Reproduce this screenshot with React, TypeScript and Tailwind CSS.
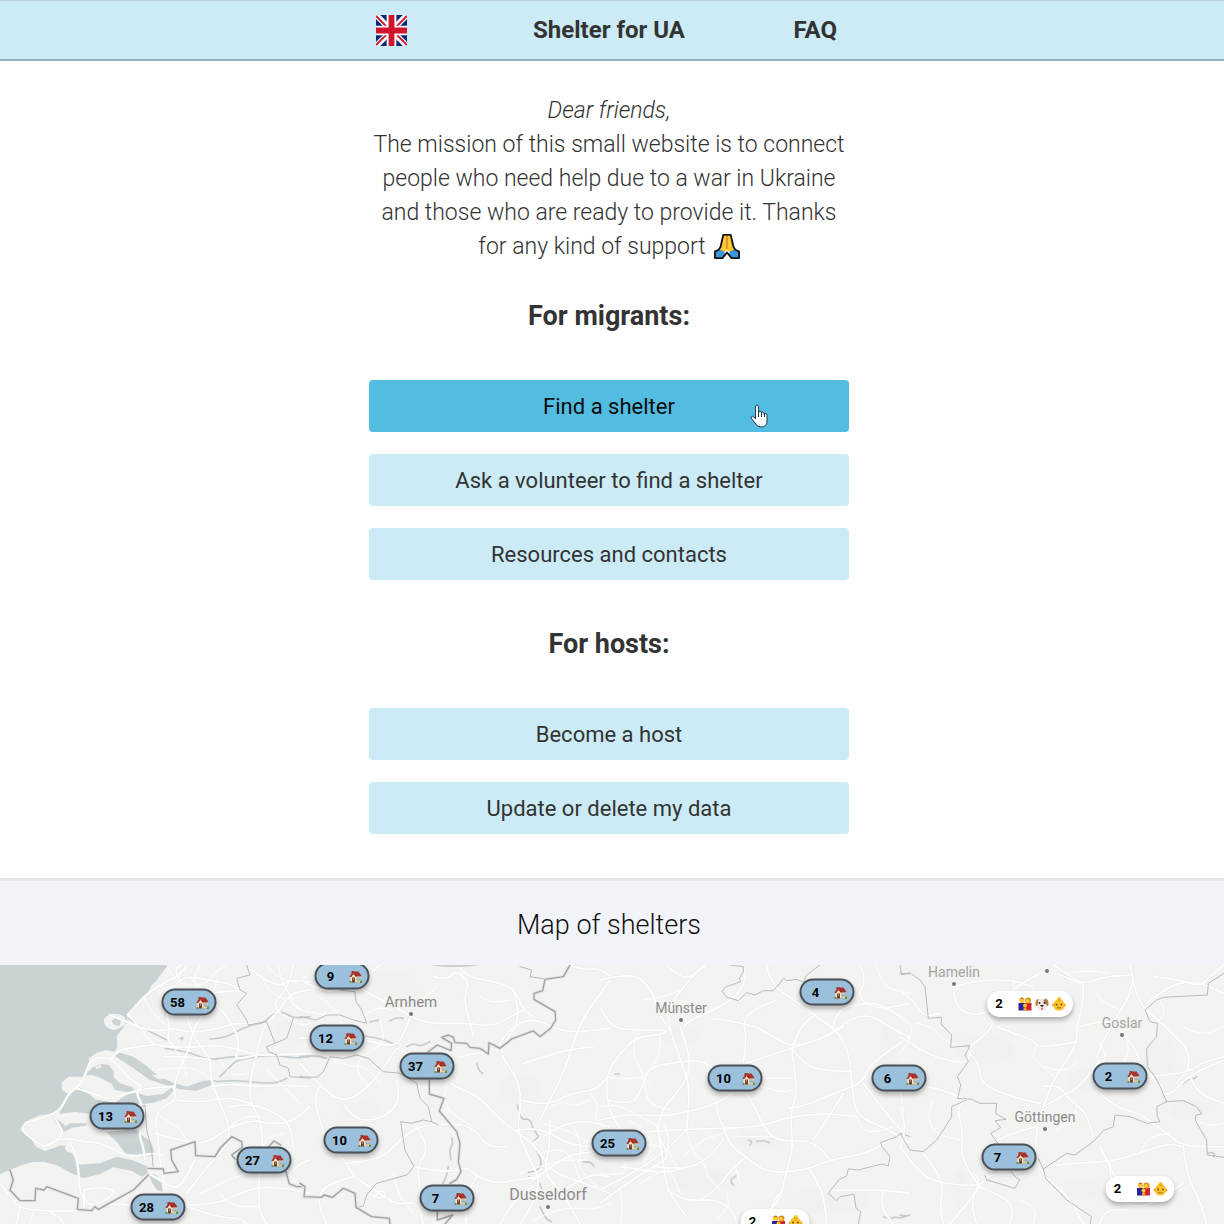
import React from "react";

const MAP_WIDTH = 1224;
const MAP_HEIGHT = 259;

/* ---------- Map geometry: each sheet is drawn in its own 3x units ---------- */

type Sheet = { x: number; roads: string[]; minor: string[]; borders: string[]; regions: string[]; rivers: string[] };

const sheets: Sheet[] = [
  {
    x: 0,
    roads: [
      "384,165 430,110 480,75 530,50 560,20",
      "480,75 500,100 540,60 570,50 630,60 700,75 735,100",
      "384,165 400,178 440,230 460,255 520,262 570,262 650,255 700,265 770,285 830,285 930,280",
      "540,60 520,30 545,15",
      "570,50 600,90 650,100 700,90 735,95",
      "330,165 370,180 410,200 470,215 520,205 560,215 600,215 660,205 700,190 760,190",
      "500,160 510,200 500,240 530,265",
      "560,165 575,220 610,270 632,300 632,360 660,430 690,500 680,560 630,610 560,700",
      "610,165 580,200 570,262 540,320 520,380 530,420 490,440 465,470 475,540 480,620 500,690",
      "460,255 410,260 350,272 335,300 305,290 270,300 255,350 230,385 205,400 180,455 120,475 75,490 65,510 100,540 140,565 165,540 210,535 250,545 310,550 360,580 400,590 460,580 490,585",
      "165,475 180,500 190,520 165,545 140,555",
      "210,545 235,600 237,690 255,720 250,750",
      "230,385 280,400 330,420 380,400 405,395 440,385 520,380",
      "335,300 360,320 385,355 430,380 405,395 435,450 415,520 430,560 435,600",
      "0,670 40,720 60,745 150,755 270,750 340,730 390,735",
      "60,745 50,790",
      "150,755 180,770 190,792",
      "250,690 290,680 350,690 320,720 270,740 250,710 255,690",
      "550,735 640,735 720,700 780,680 860,685 930,700",
      "550,735 640,770 720,775 740,792",
      "780,680 770,740 800,792",
      "465,520 500,530 560,545 620,550 690,500 760,480 800,490 870,490 930,440",
      "770,285 750,350 750,430 780,470 790,560 775,680",
      "632,380 700,370 760,380 850,375 930,380",
      "690,440 750,430 820,455 870,490 880,560",
      "530,420 600,430 680,410 750,430",
      "770,285 780,210 840,150 870,100 930,90",
      "835,15 840,60 870,100 880,140 930,160",
      "740,20 780,50 840,80 870,60 930,65",
      "880,15 870,60 850,100 820,130 840,160",
      "632,300 570,290 490,290",
      "645,130 700,190 720,260 700,300 770,285",
      "445,640 480,660 530,690 560,650 590,590",
      "870,640 900,610 930,600",
    ],
    minor: [
      "500,15 520,60 570,80 620,70 640,40 680,15",
      "600,15 580,50 590,85",
      "650,60 640,110 620,165",
      "430,110 450,150 480,180 540,230",
      "475,330 540,320 600,330 632,360",
      "520,262 550,300 560,350",
      "660,300 690,350 740,340",
      "480,470 540,500 560,545",
      "800,330 850,380 900,430",
      "790,60 810,100 860,120 900,110",
      "800,15 830,50 880,70 920,50",
      "850,165 900,200 930,190",
      "100,755 90,792",
      "600,700 700,650 760,640 850,610",
      "660,700 690,740 780,740",
      "690,500 720,470 780,470",
      "850,520 800,530 790,560",
    ],
    rivers: [
      "384,175 430,205 480,230 500,240",
      "540,235 550,230 545,240",
      "630,237 670,235 710,215 750,195 790,190 820,160 850,155 880,175 930,170",
      "495,265 560,275 600,290 632,300 690,290 740,290 770,285",
      "660,350 690,320 710,300 770,290 830,285 880,295 930,290",
      "650,365 700,360 770,368 830,370 860,355",
    ],
    regions: [
      "740,15 750,45 710,55 720,90 740,100 710,135 740,180 745,195 800,185 825,250 800,260 805,275 830,285",
      "880,175 860,235 825,250",
      "830,285 840,315 865,325 870,350 930,355",
      "405,450 435,435 440,510 455,570 460,625",
    ],
    borders: [
      "30,630 40,660 30,690 60,722 105,722 107,685 132,690 140,680 235,715 232,748 275,752 285,740 295,748 360,712 400,690 445,645",
      "445,625 490,627 492,640 535,635 515,600 512,570 585,545 587,587 645,590 660,565 695,530 725,545 727,562",
      "727,562 695,585 705,597",
      "806,560 822,543 842,555",
      "858,635 868,672 890,680 912,680 915,712 930,712",
    ],
  },
  {
    x: 300,
    roads: [
      "0,60 40,80 100,100 160,60 200,50 240,15",
      "160,60 200,100 270,130 330,170 390,190 460,190 510,190 580,200 640,165 670,150",
      "400,50 440,60 470,30 510,70 490,110 510,190 520,230",
      "470,15 500,50 560,60 640,80 670,150 700,170",
      "0,235 100,230 200,240 290,265 320,200 330,170",
      "290,265 350,290 440,370 540,410 590,470 640,510 700,550 760,640 830,660 930,700",
      "640,90 670,180 590,270 650,350 665,420 650,510 690,600 720,660 700,730 660,792",
      "590,270 620,210 700,170 790,220 930,205",
      "0,310 60,380 130,430 210,380 290,265",
      "60,380 40,400 60,490 90,560 140,610 160,650 240,700",
      "130,430 160,480 240,480 300,430 290,360",
      "140,610 240,600 290,550 350,500 440,490 520,500 560,560 620,560",
      "340,620 440,640 500,620 530,650 590,670 650,660 720,650",
      "350,500 390,560 350,620 360,680",
      "160,650 80,670 50,720 80,792",
      "240,700 290,740 350,720 370,792",
      "930,60 880,130 840,190 790,340 760,400 720,480",
      "670,310 730,290 800,270 880,260",
      "660,420 740,440 810,400 890,390 930,340",
      "500,792 490,720 530,650",
      "700,550 770,500 850,480 930,500",
      "750,480 750,560 730,640 790,700 840,792",
      "700,660 800,580 880,580 930,540",
      "780,700 860,640 930,650",
      "800,15 850,30 900,25 930,50",
      "650,510 720,500 800,550 870,560",
      "600,792 640,720 700,680",
      "210,700 240,720 260,700 240,690 220,715",
    ],
    minor: [
      "60,110 110,150 130,200 100,240",
      "240,180 260,240 220,270 180,290 170,340 210,380",
      "410,80 380,110 350,130",
      "540,110 570,130 630,120",
      "480,290 530,280 590,270",
      "440,370 420,440 520,500",
      "100,300 150,320 200,320 240,370",
      "20,150 60,170 120,150",
      "660,640 720,620 780,600 860,600",
      "740,450 780,420 820,440 870,420",
      "820,500 850,560 830,620 890,680",
      "280,640 290,700 340,760",
      "700,780 780,740 880,750 930,730",
      "730,490 800,510 850,540 930,560",
      "720,580 780,560 820,600 840,660",
      "870,400 900,430 880,470 910,500",
      "180,180 220,140 280,150",
    ],
    rivers: [
      "195,228 240,235 290,255",
      "320,260 340,248 360,260 390,245",
      "270,182 290,172 310,175",
      "210,186 235,180",
      "0,290 40,285 80,295",
      "530,310 535,330 548,340",
      "455,535 460,550 448,570 453,600",
      "445,620 440,650 428,670",
      "652,435 660,480 690,475 700,510 718,530 700,545",
      "705,560 720,590 725,620 700,635 685,637",
      "685,650 715,660 725,685",
      "720,740 735,775 755,785",
      "850,605 870,605 882,618",
    ],
    regions: [
      "120,90 165,95 168,125 185,150 200,190 160,180 120,165 80,165 50,180 0,170",
      "0,350 50,352 70,335 90,290 130,295 170,285 205,295 250,335 300,340 350,370 360,415 385,440 395,485 415,495",
      "395,485 370,480 335,490 302,485 315,570 342,620 320,645 230,670 200,705 190,738 170,742",
      "660,20 695,30 690,50 735,57",
    ],
    borders: [
      "810,15 790,50 735,58 728,92 702,100 702,118 765,155 767,180 752,205 720,230 700,213 635,237 600,265 567,248 565,282 540,265 510,262 500,250 465,248 460,232 445,225 425,232 455,250 453,272 412,255 385,275",
      "388,360 388,402 432,415 418,453 470,515 480,550 475,605 483,635 470,658 450,670",
      "0,670 15,680 12,710 65,712 72,705 98,712 130,685 165,700 168,742 215,770 268,775 270,792",
      "412,750 412,780 458,765 435,792",
    ],
  },
  {
    x: 600,
    roads: [
      "0,60 60,45 120,50 160,100 175,160 210,210",
      "200,15 250,65 300,30 320,15",
      "310,15 240,90 205,150 210,210 245,310 270,380 260,510",
      "0,140 30,205 110,210 210,210 180,225 110,230 60,280 20,340 20,420 40,480 90,540",
      "250,200 270,180 330,155 400,120 440,60 430,15",
      "240,200 270,280 265,360 190,440 170,500 190,600 200,690 260,770",
      "335,175 450,190 520,230 575,260 660,240 730,200",
      "440,310 575,265 680,230 790,150 900,220 930,230",
      "430,305 440,250 430,180 460,150 530,120",
      "500,15 510,70 580,120 650,170 720,220 750,290 755,380 770,470 850,500 930,550",
      "575,265 600,200 650,160",
      "575,265 610,310 660,330 755,335",
      "575,265 585,340 590,400 570,470 580,560 560,630 540,720 500,760",
      "755,380 790,370 810,310 930,230",
      "755,380 700,400 640,430 570,445",
      "0,480 90,460 180,470 270,455 350,430 400,400",
      "0,540 100,520 200,510 370,505 480,500 570,470 680,460 770,470",
      "370,505 390,560 440,590 500,640 620,630 690,600 800,580 870,540",
      "0,730 80,670 160,620 210,590 180,540 170,500",
      "0,690 100,640 200,570 260,510",
      "630,630 670,690 680,792",
      "440,400 470,450 490,500 530,545 640,540 690,600",
      "640,540 680,480 730,400",
      "490,355 580,355",
      "350,430 355,480 380,510",
      "20,420 100,440 130,370 150,320 240,305 300,300 350,330",
      "300,720 360,680 390,630 440,590",
      "200,690 250,720 300,720 350,720 400,750 410,792",
      "890,350 910,420 910,520",
      "780,15 800,60 770,110 830,150 930,130",
      "700,200 710,150 780,130 840,130 900,170",
      "500,792 520,720 550,690",
      "690,690 770,690 850,690 930,700",
      "850,690 840,740 880,792",
      "790,370 850,450 910,520",
      "160,620 250,630 320,600 370,540",
      "60,620 130,630 200,640 260,620",
    ],
    minor: [
      "110,230 90,270 130,340 140,430 210,450",
      "180,225 185,290 130,350",
      "80,480 130,500 160,560 130,610",
      "260,510 270,570 310,600 320,650 360,690",
      "400,530 450,530 520,530",
      "0,440 50,430 100,460 180,500",
      "350,780 390,740 380,700",
      "20,350 70,360 120,350 150,370",
      "250,590 300,540 370,520",
      "0,590 60,560 120,550 180,560",
      "60,690 70,740 60,792",
      "120,670 200,620 220,650 240,700",
      "830,15 840,80 930,100",
      "880,500 800,530 770,470",
      "410,630 420,670",
      "130,120 200,110 240,90",
      "460,370 540,400 580,390",
      "0,640 70,650 80,610 50,580",
      "180,470 210,520 200,570 230,620",
    ],
    rivers: [
      "447,540 458,545 450,555",
      "470,545 490,540 508,548",
      "408,648 395,655 393,668 400,675",
      "45,342 58,342",
      "850,770 870,778 885,770 900,775 930,765",
    ],
    regions: [
      "390,15 430,20 430,35 418,55 422,65 375,82 367,95 380,112 415,122 440,98 465,105 490,92 520,92 552,55 560,62 590,58 610,67 620,45 660,15",
      "900,15 905,45 930,38",
      "930,530 902,520 890,530 842,548 845,558 870,590 865,618 845,612 775,630 745,627 740,648 718,658 685,700 710,722 720,710 762,703 768,745 782,755 775,792",
    ],
    borders: [],
  },
  {
    x: 900,
    roads: [
      "160,80 160,110 185,160 260,165 310,110 380,60 440,30 520,60 550,75",
      "160,80 230,60 330,60 400,80",
      "460,15 500,40 550,75 610,50 690,45",
      "550,75 550,130 530,200 530,250 500,300 460,360 430,440 410,500 405,600",
      "690,15 700,70 720,130 750,160 830,230 870,280 860,340 900,310 972,290",
      "700,50 690,110 660,150 640,190 610,240 590,290",
      "540,200 600,180 650,195 700,260 720,300",
      "290,200 340,220 400,240 410,260 480,255 530,245",
      "210,260 290,200 260,165",
      "0,90 40,120 70,170 120,160",
      "0,230 60,270 130,300 200,310 215,270",
      "200,270 240,310 240,370 330,410 420,430",
      "200,420 130,390 80,380",
      "430,440 500,400 540,380 600,300",
      "590,390 640,440 720,460 800,520 850,560 972,560",
      "430,380 470,370 510,420 560,460 580,530",
      "410,500 330,520 260,560",
      "405,600 360,650 270,640 240,680 130,670 70,650 0,560",
      "240,680 210,720 150,792",
      "240,680 310,710 340,740 330,792",
      "430,620 500,610 630,605 720,580 800,550 850,560",
      "850,560 860,650 900,720 920,792",
      "630,605 630,680 680,740 760,735 850,670",
      "600,560 620,600 650,660",
      "720,310 760,350 800,420 860,350 972,300",
      "970,15 930,50 900,80 840,60 760,50",
      "740,130 800,80 880,60 972,100",
      "870,350 890,400 972,430",
      "240,680 180,600 190,520 170,440 200,420",
      "0,440 20,500 0,560",
      "70,580 100,620 130,670 120,740 130,792",
      "600,792 610,750 680,750",
      "405,600 430,650 500,700 550,792",
      "230,792 210,740 240,660 220,640",
      "740,350 860,340 870,320 830,370",
    ],
    minor: [
      "50,190 100,200 130,240 200,270",
      "340,60 350,110 300,150",
      "410,260 390,290 430,320 460,350",
      "590,240 620,280 610,310",
      "0,170 40,190 30,240 0,280",
      "850,200 900,230 972,200",
      "470,510 520,480 530,440",
      "680,220 690,270 670,310",
      "720,580 740,530 810,520",
      "100,420 80,460 100,520 180,540",
      "360,720 410,740 400,792",
      "660,150 610,130 590,100",
      "880,480 930,500 972,490",
      "770,110 800,150 780,180",
      "430,320 500,340 530,300",
      "500,40 560,30 620,40",
    ],
    rivers: ["850,370 865,357 880,358 890,350", "925,580 935,575 945,585 940,590", "0,765 20,768"],
    regions: [
      "0,40 35,42 60,60 75,80 85,175 125,172 123,192 155,225 152,262 210,257 195,285 205,305 172,350 182,375 173,415 215,418 240,430 260,430 290,430 287,460 318,478 285,482 302,503 272,520 295,552",
      "0,520 30,570 70,575 110,540 130,510 155,470 155,440 200,420",
      "972,40 925,70 922,105 790,112 770,120 735,150 750,185 772,190 770,230 740,265 742,320 765,350 785,390 800,425 850,422 890,440 905,462 888,465 885,480 920,540 922,585 972,592",
      "800,425 770,440 772,470 780,485 740,490 690,470 645,465 640,500 610,512 580,545 525,585 500,580 430,627",
      "415,595 430,627 437,655 500,720 575,770 570,792",
      "255,645 260,660 345,685 360,658 350,655 330,630",
    ],
    borders: [],
  },
];

function toPoints(line: string) {
  return line.split(" ").map((pair) => pair.split(",").map(Number));
}

/* Rounds a list of points into a flowing curve through the segment midpoints. */
function curve(line: string) {
  const p = toPoints(line);
  let d = `M${p[0][0]} ${p[0][1]}`;
  for (let i = 1; i < p.length - 1; i++) {
    d += `Q${p[i][0]} ${p[i][1]} ${(p[i][0] + p[i + 1][0]) / 2} ${(p[i][1] + p[i + 1][1]) / 2}`;
  }
  const last = p[p.length - 1];
  return `${d}L${last[0]} ${last[1]}`;
}

function straight(line: string) {
  return "M" + toPoints(line).map((p) => p.join(" ")).join("L");
}

const patches = [
  [130, 1000, 30, 16], [300, 1030, 24, 12], [395, 985, 22, 14], [520, 1090, 20, 16], [590, 1180, 26, 20],
  [680, 1035, 20, 10], [700, 1180, 30, 12], [890, 1050, 10, 26], [985, 1050, 30, 14], [1090, 1080, 22, 12],
  [1160, 1060, 16, 20], [960, 1190, 8, 20], [1190, 1110, 20, 10], [830, 1200, 40, 14], [240, 1085, 26, 10],
  [760, 1140, 26, 8], [360, 1110, 20, 8], [1080, 1190, 20, 10],
];

function BaseMap() {
  return (
    <svg
      className="absolute inset-0 size-full"
      viewBox={`0 0 ${MAP_WIDTH} ${MAP_HEIGHT}`}
      preserveAspectRatio="xMidYMid slice"
      aria-hidden="true"
    >
      <rect width={MAP_WIDTH} height={MAP_HEIGHT} fill="#f3f3f2" />
      {patches.map(([x, y, rx, ry]) => (
        <ellipse key={`${x}-${y}`} cx={x} cy={y - 965} rx={rx} ry={ry} fill="#f1f1f0" />
      ))}
      <g transform="translate(0 -5) scale(0.33333)" fill="#cad2d3">
        <path d="M0 15H505L482 44 468 64 455 76 440 104 425 122 408 142 384 165 376 195 350 228 352 260 345 275 318 271 290 278 266 296 270 312 252 350 205 350 185 368 186 390 205 402 196 430 178 456 160 461 120 466 75 485 61 508 70 520 86 524 108 560 134 573 160 565 185 555 200 575 215 578 238 614 300 610 350 590 395 600 440 618 445 640 425 650 395 632 340 622 300 642 250 655 215 640 170 616 130 605 95 607 60 617 0 642Z" />
        <path d="M205 403 235 382 262 396 285 418 345 428 385 400 405 395 420 425 405 445 330 455 275 462 225 456 178 462Z" />
        <path d="M318 515 410 508 425 525 452 545 463 575 460 588 400 592 378 582 350 545Z" />
        <path d="M160 476 175 500 192 517 215 503 255 497 262 490 210 490 196 498 182 484Z" />
        <path d="M255 345 278 322 305 312 325 314 342 335 340 350 360 370 398 382 402 390 385 397 345 390 335 372 305 355 280 346Z" />
        <path d="M345 288 360 278 400 290 440 318 470 345 520 368 560 380 610 362 650 360 635 376 590 392 540 388 500 376 450 360 400 325Z" />
        <path d="M405 396 440 408 490 402 515 382 520 392 500 415 460 428 425 432Z" />
        <path d="M445 640 470 645 485 670 488 695 470 690 455 665Z" />
        <path d="M180 560 200 575 194 562 198 555Z" />
      </g>
      <g transform="translate(0 -5) scale(0.33333)">
        <path d="M374 172C355 155 322 158 312 178 310 198 325 210 345 210L376 196Z" fill="#f3f3f2" />
        <path d="M335 180Q350 170 362 182L360 196Q340 202 335 180" fill="#cad2d3" />
        <path d="M285 322 303 314 305 322 290 327ZM455 345 485 346 498 357 475 358Z" fill="#f3f3f2" />
      </g>
      {sheets.map((sheet) => (
        <g
          key={sheet.x}
          transform={`translate(${sheet.x} -5) scale(0.33333)`}
          fill="none"
          strokeLinejoin="round"
          strokeLinecap="round"
        >
          <g stroke="#c6cdce" strokeWidth="5">
            {sheet.rivers.map((line) => <path key={line} d={curve(line)} />)}
          </g>
          <g stroke="#ebebea" strokeWidth="8">
            {sheet.roads.map((line) => <path key={line} d={curve(line)} />)}
          </g>
          <g stroke="#ffffff" strokeWidth="3">
            {sheet.minor.map((line) => <path key={line} d={curve(line)} />)}
          </g>
          <g stroke="#ffffff" strokeWidth="5">
            {sheet.roads.map((line) => <path key={line} d={curve(line)} />)}
          </g>
          <g stroke="#b9bbbb" strokeWidth="3">
            {sheet.regions.map((line) => <path key={line} d={straight(line)} />)}
          </g>
          <g stroke="#e6e6e6" strokeWidth="10">
            {sheet.borders.map((line) => <path key={line} d={straight(line)} />)}
          </g>
          <g stroke="#a0a2a2" strokeWidth="4">
            {sheet.borders.map((line) => <path key={line} d={straight(line)} />)}
          </g>
        </g>
      ))}
      <ellipse cx="455" cy="0" rx="22" ry="2" fill="#cfcfcf" />
    </svg>
  );
}

/* ---------- Pictograms ---------- */

function House() {
  return (
    <svg className="size-[14px] shrink-0" viewBox="0 0 28 28" aria-hidden="true">
      <path d="M6 3h4v6H6z" fill="#a33a30" />
      <path d="M4 14 10 6 25 12v13H4z" fill="#fbe6c4" />
      <path d="M9 4h11l6 9-2 1H15z" fill="#a8332d" />
      <path d="m12 8 5 6h-3l-4-5-5 6H2z" fill="#8a2723" />
      <path d="M2 14 9 4h4l-1 3-7 8z" fill="#a8332d" />
      <path d="M7 16h6v10H7z" fill="#74402d" />
      <path d="M9 17h2v4H9z" fill="#b98a6b" />
      <path d="M16 16h8v6h-8z" fill="#7b97a3" />
      <path d="M17 17h6v3h-6z" fill="#a9c7d4" />
      <path d="M2 23h4v4H2zM23 22h4v5h-4z" fill="#6b8f3c" />
      <path d="M14 24h9v2h-9z" fill="#d3b48a" />
    </svg>
  );
}

function Family() {
  return (
    <svg className="size-[14px] shrink-0" viewBox="0 0 28 28" aria-hidden="true">
      <path d="M1 12h13v15H1z" fill="#2a2399" />
      <path d="M14 12h13v15H14z" fill="#d3252c" />
      <circle cx="8" cy="7" r="5" fill="#f0ab1d" />
      <circle cx="20" cy="7" r="6" fill="#dd8c1a" />
      <path d="M4 3q4-4 8 0l-2 2H5z" fill="#b87612" />
      <circle cx="8" cy="8" r="4" fill="#ffce3c" />
      <circle cx="19" cy="8" r="4" fill="#ffce3c" />
      <circle cx="14" cy="17" r="4" fill="#fcc52b" />
      <path d="M11 27v-6h6v6z" fill="#e9a922" />
    </svg>
  );
}

function Dog() {
  return (
    <svg className="size-[14px] shrink-0" viewBox="0 0 28 28" aria-hidden="true">
      <path d="M7 4h14l5 12-5 9H7l-5-9z" fill="#efe8e2" />
      <path d="M7 4Q0 5 1 16q2 5 4 0zM20 3q8 1 7 13-2 5-4 0zM17 5h5l1 9h-5z" fill="#b57949" />
      <circle cx="9" cy="12" r="2" fill="#38302f" />
      <circle cx="19" cy="12" r="2" fill="#38302f" />
      <path d="M10 16h8l-4 5z" fill="#2b2728" />
      <path d="M12 22h4v4h-4z" fill="#e67680" />
    </svg>
  );
}

function Child() {
  return (
    <svg className="size-[14px] shrink-0" viewBox="0 0 28 28" aria-hidden="true">
      <circle cx="3" cy="16" r="3" fill="#eaa21c" />
      <circle cx="25" cy="16" r="3" fill="#eaa21c" />
      <path d="M14 0q5 0 4 5 7 3 7 11 0 11-11 11T3 16Q3 8 10 5q0-5 4-5" fill="#fdc22b" />
      <path d="M12 6q4 3 6-1" stroke="#d08e16" strokeWidth="2" fill="none" />
      <circle cx="9" cy="15" r="2" fill="#7a5116" />
      <circle cx="19" cy="15" r="2" fill="#7a5116" />
      <path d="M10 21q4 2 8 0" stroke="#a2641a" strokeWidth="2" fill="none" />
    </svg>
  );
}

function FoldedHands() {
  return (
    <svg className="ml-2 inline-block size-[26px] align-[-5px]" viewBox="0 0 28 28" role="img" aria-label="Folded hands">
      <path d="M10 2h8l3 14 2 3-5 3-4-4-4 4-5-3 2-3z" fill="#ffc636" />
      <path d="M5 18q6 0 7 5l-3 4H1v-7zM23 18q-6 0-7 5l3 4h8v-7z" fill="#3c96dc" />
      <path
        d="M10 2h8l3 13 2 3 4 2v7h-8l-5-6-5 6H1v-7l4-2 2-3z"
        fill="none"
        stroke="#141414"
        strokeWidth="2"
        strokeLinejoin="round"
      />
      <path d="M14 3v14" fill="none" stroke="#a86d14" strokeWidth="1" />
    </svg>
  );
}

function UnionFlag() {
  return (
    <svg className="size-[31px]" viewBox="0 0 32 32" aria-hidden="true">
      <path d="M0 0h32v32H0z" fill="#0b2a73" />
      <path d="m0 0 32 32M32 0 0 32" stroke="#fff" strokeWidth="6" />
      <path d="M0 1 12 13M20 13 32 1M12 19 0 31M20 19l12 12" stroke="#d0142c" strokeWidth="2" />
      <path d="M16 0v32M0 16h32" stroke="#fff" strokeWidth="10" />
      <path d="M16 0v32M0 16h32" stroke="#d0142c" strokeWidth="6" />
    </svg>
  );
}

function HandPointer() {
  return (
    <svg className="absolute top-6 right-[81px] h-6 w-[18px]" viewBox="0 0 18 24" aria-hidden="true">
      <path
        d="M5.500 15V3q0-2 1.500-2T8.500 3v6q0-2 1.500-1.800T11.500 9.500q0-2 1.300-1.600T14.200 10.500q0-1.500 1.400-1.200T17 11.500V17q0 6-6 6-4 0-6-4L1.500 14.500q-1-1.800.8-2.200Q4 12.500 5.500 15Z"
        fill="#fff"
        stroke="#1c3b50"
        strokeWidth="1"
        strokeLinejoin="round"
      />
      <path d="M8.500 8v5M11.500 9v4M14.500 10v3" stroke="#1c3b50" strokeWidth="1" />
    </svg>
  );
}

/* ---------- Map overlays ---------- */

const cities = [
  { name: "Arnhem", x: 411, y: 1014, size: "text-[15px]", color: "text-[#8b8b8b]" },
  { name: "Münster", x: 681, y: 1020, size: "text-[14px]", color: "text-[#8b8b8b]" },
  { name: "Dusseldorf", x: 548, y: 1207, size: "text-[16px]", color: "text-[#8b8b8b]" },
  { name: "Hamelin", x: 954, y: 984, size: "text-[14px]", color: "text-[#a3a3a3]" },
  { name: "Goslar", x: 1122, y: 1035, size: "text-[14px]", color: "text-[#a3a3a3]" },
  { name: "Göttingen", x: 1045, y: 1129, size: "text-[14px]", color: "text-[#8b8b8b]" },
  { name: "", x: 1047, y: 971, size: "text-[14px]", color: "text-[#a3a3a3]" },
];

const shelters = [
  { count: 9, x: 342, y: 976 },
  { count: 58, x: 189, y: 1002 },
  { count: 12, x: 337, y: 1038 },
  { count: 37, x: 427, y: 1066 },
  { count: 13, x: 117, y: 1116 },
  { count: 10, x: 351, y: 1140 },
  { count: 27, x: 264, y: 1160 },
  { count: 28, x: 158, y: 1207 },
  { count: 7, x: 447, y: 1198 },
  { count: 25, x: 619, y: 1143 },
  { count: 10, x: 735, y: 1078 },
  { count: 4, x: 827, y: 992 },
  { count: 6, x: 899, y: 1078 },
  { count: 2, x: 1120, y: 1076 },
  { count: 7, x: 1009, y: 1157 },
];

const guests = [
  { count: 2, x: 1030, y: 1004, dog: true },
  { count: 2, x: 1140, y: 1189, dog: false },
  { count: 2, x: 775, y: 1222, dog: false },
];

function place(x: number, y: number): React.CSSProperties {
  return { left: `${(x / MAP_WIDTH) * 100}%`, top: `${((y - 965) / MAP_HEIGHT) * 100}%` };
}

function ShelterMap() {
  return (
    <div className="relative h-[259px] overflow-hidden bg-[#f3f3f2]">
      <BaseMap />
      {cities.map((city) => (
        <div key={city.name} style={place(city.x, city.y)} className="absolute size-0">
          <span className="absolute -top-0.5 -left-0.5 size-1 rounded-full bg-[#777777]" />
          <span className={`absolute bottom-0.5 left-0 -translate-x-1/2 leading-5 whitespace-nowrap ${city.size} ${city.color}`}>
            {city.name}
          </span>
        </div>
      ))}
      {shelters.map((pin) => (
        <button
          key={`${pin.x}-${pin.y}`}
          type="button"
          aria-label={`${pin.count} shelters`}
          style={place(pin.x, pin.y)}
          className="absolute flex h-[27px] w-[55px] -translate-1/2 items-center justify-between rounded-full border-2 border-[#4b5156] bg-[#9bc0dc] pr-[5px] pl-1 text-[13px] font-bold text-black shadow-[0_3px_5px_rgba(0,0,0,0.3)]"
        >
          <span className="w-5 text-center">{pin.count}</span>
          <House />
        </button>
      ))}
      {guests.map((pin) => (
        <button
          key={`${pin.x}-${pin.y}`}
          type="button"
          aria-label={`${pin.count} guests`}
          style={place(pin.x, pin.y)}
          className="absolute flex h-[26px] -translate-1/2 items-center gap-[3px] rounded-full bg-white pr-[7px] pl-2 text-[13px] font-bold text-black shadow-[0_3px_5px_rgba(0,0,0,0.3)]"
        >
          <span className="mr-3 w-2">{pin.count}</span>
          <Family />
          {pin.dog && <Dog />}
          <Child />
        </button>
      ))}
    </div>
  );
}

/* ---------- Page ---------- */

function Action({ children, active = false }: { children: React.ReactNode; active?: boolean }) {
  return (
    <button
      type="button"
      className={
        active
          ? "relative h-[52px] w-full cursor-pointer rounded bg-[#52bce1] text-[22px] text-[#0c0c0c]"
          : "relative h-[52px] w-full cursor-pointer rounded bg-[#cbebf6] text-[22px] text-[#333333] hover:bg-[#52bce1]"
      }
    >
      {children}
      {active && <HandPointer />}
    </button>
  );
}

export default function App() {
  return (
    <div className="bg-white font-['Roboto',sans-serif] text-[#333333]">
      <header className="border-t border-b-2 border-t-[#bfd3da] border-b-[#8fb5be] bg-[#cbebf6] pr-1.5">
        <nav className="mx-auto grid h-[58px] max-w-[480px] grid-cols-[1fr_auto_1fr] items-center text-2xl font-bold">
          <button type="button" aria-label="Language: English" className="ml-[7px] justify-self-start">
            <UnionFlag />
          </button>
          <a href="#home">Shelter for UA</a>
          <a href="#faq" className="mr-3 justify-self-end">FAQ</a>
        </nav>
      </header>

      <main>
        <div className="pt-[33px] pr-1.5 pb-11">
          <div className="mx-auto max-w-[480px] text-center">
            <p className="text-[23px] leading-[34px] font-light">
              <em>Dear friends,</em>
              <br />
              The mission of this small website is to connect people who need help due to a war in Ukraine and those who
              are ready to provide it. Thanks for any kind of support
              <FoldedHands />
            </p>
            <h2 className="mt-8 text-[27px] leading-10 font-bold">For migrants:</h2>
            <div className="mt-11 flex flex-col gap-[22px]">
              <Action active>Find a shelter</Action>
              <Action>Ask a volunteer to find a shelter</Action>
              <Action>Resources and contacts</Action>
            </div>
            <h2 className="mt-11 text-[27px] leading-10 font-bold">For hosts:</h2>
            <div className="mt-11 flex flex-col gap-[22px]">
              <Action>Become a host</Action>
              <Action>Update or delete my data</Action>
            </div>
          </div>
        </div>

        <section className="border-t-3 border-[#e7e9ec] bg-[#f3f4fa]">
          <h2 className="pt-6 pr-1.5 pb-5 text-center text-[27px] leading-10 font-light text-[#111111]">Map of shelters</h2>
          <ShelterMap />
        </section>
      </main>
    </div>
  );
}
